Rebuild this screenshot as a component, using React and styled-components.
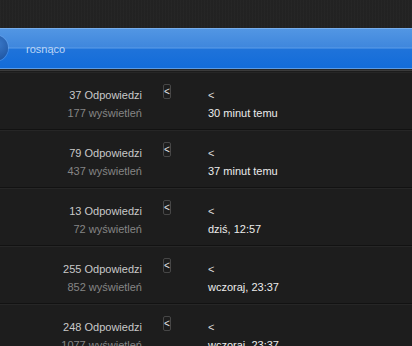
import React from 'react';
import styled, { createGlobalStyle } from 'styled-components';

const GlobalStyle = createGlobalStyle`
  html, body {
    margin: 0;
    padding: 0;
    background: #1d1d1d;
  }
  body {
    font-family: 'Liberation Sans', Arial, sans-serif;
    font-size: 11px;
    overflow: hidden;
  }
`;

const threads = [
  { replies: 37, views: 177, last: '30 minut temu' },
  { replies: 79, views: 437, last: '37 minut temu' },
  { replies: 13, views: 72, last: 'dziś, 12:57' },
  { replies: 255, views: 852, last: 'wczoraj, 23:37' },
  { replies: 248, views: 1077, last: 'wczoraj, 23:37' }
];

const Page = styled.div`
  width: 412px;
  height: 346px;
  overflow: hidden;
  background: #1d1d1d;
`;

const TopStrip = styled.div`
  height: 28px;
  background: #232323;
  background-image: repeating-linear-gradient(
    90deg,
    rgba(255, 255, 255, 0.012) 0px,
    rgba(255, 255, 255, 0.012) 1px,
    rgba(0, 0, 0, 0.02) 1px,
    rgba(0, 0, 0, 0.02) 3px
  );
`;

const SortBar = styled.div`
  position: relative;
  height: 41px;
  display: flex;
  align-items: center;
  padding-left: 26px;
  box-sizing: border-box;
  border-top: 1px solid #78aeec;
  border-bottom: 1px solid #5b9be5;
  background: linear-gradient(
    to bottom,
    #5296e3 0px,
    #3f87dd 18px,
    #5c9de8 19px,
    #1f73da 20px,
    #136cd9 39px
  );
  overflow: hidden;
`;

const Knob = styled.span`
  position: absolute;
  left: -18px;
  top: 6px;
  width: 26px;
  height: 26px;
  border-radius: 50%;
  background: radial-gradient(circle at 60% 35%, #3a78c8 0%, #1f56a3 70%, #1a4c92 100%);
  box-shadow: 0 0 0 1px rgba(120, 170, 235, 0.4);
`;

const SortLabel = styled.span`
  color: #bdd6f5;
  font-size: 11px;
`;

const Divider = styled.div`
  height: 3px;
  background: linear-gradient(to bottom, #262626 0px, #262626 1px, #3b3b3b 1px, #3b3b3b 2px, #1c1c1c 2px);
`;

const Row = styled.div`
  height: 58px;
  box-sizing: border-box;
  display: flex;
  align-items: flex-start;
  background: #1d1d1d;
  border-bottom: 1px solid #121212;
  box-shadow: inset 0 1px 0 #262626;
`;

const Stats = styled.div`
  width: 142px;
  padding-top: 14px;
  text-align: right;
  line-height: 18px;
`;

const Replies = styled.div`
  color: #c9c9c9;
`;

const Views = styled.div`
  color: #858585;
`;

const Toggle = styled.span`
  margin: 12px 0 0 21px;
  width: 8px;
  height: 15px;
  box-sizing: border-box;
  border: 1px solid #474747;
  border-radius: 2px;
  display: flex;
  align-items: center;
  justify-content: center;
  color: #e6e6e6;
  font-size: 10px;
  line-height: 1;
`;

const Latest = styled.div`
  margin-left: 37px;
  padding-top: 14px;
  line-height: 18px;
  color: #ececec;
`;

const Arrow = styled.div`
  color: #dcdcdc;
`;

export default function App() {
  return (
    <Page>
      <GlobalStyle />
      <TopStrip />
      <SortBar>
        <Knob />
        <SortLabel>rosnąco</SortLabel>
      </SortBar>
      <Divider />
      {threads.map((t) => (
        <Row key={t.replies + t.last}>
          <Stats>
            <Replies>{t.replies} Odpowiedzi</Replies>
            <Views>{t.views} wyświetleń</Views>
          </Stats>
          <Toggle>&lt;</Toggle>
          <Latest>
            <Arrow>&lt;</Arrow>
            <div>{t.last}</div>
          </Latest>
        </Row>
      ))}
    </Page>
  );
}
